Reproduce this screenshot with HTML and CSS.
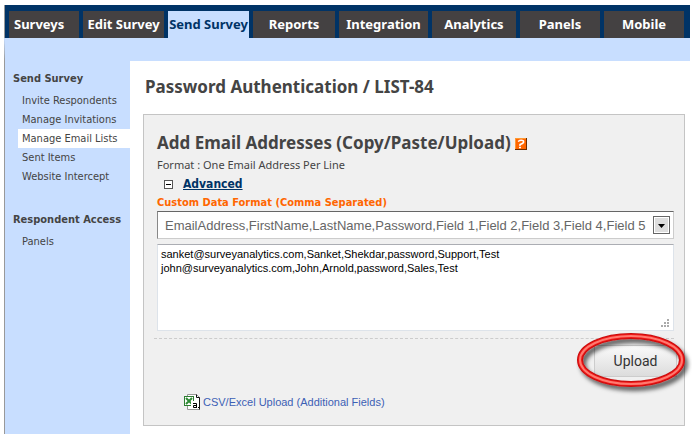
FILE: index.html
```html
<!doctype html>
<html lang="en">
	<head>
		<meta charset="utf-8">
		<title>Password Authentication / LIST-84</title>
		<link rel="stylesheet" href="styles.css">
	</head>
	<body>
		<div class="page">
			<nav class="tabs">
				<a class="first" href="#">Surveys</a>
				<a href="#">Edit Survey</a>
				<a class="active" href="#">Send Survey</a>
				<a href="#">Reports</a>
				<a href="#">Integration</a>
				<a href="#">Analytics</a>
				<a href="#">Panels</a>
				<a href="#">Mobile</a>
			</nav>
			<div class="columns">
				<aside class="sidebar">
					<h2>Send Survey</h2>
					<ul>
						<li><a href="#">Invite Respondents</a></li>
						<li><a href="#">Manage Invitations</a></li>
						<li><a class="active" href="#">Manage Email Lists</a></li>
						<li><a href="#">Sent Items</a></li>
						<li><a href="#">Website Intercept</a></li>
					</ul>
					<h2>Respondent Access</h2>
					<ul>
						<li><a href="#">Panels</a></li>
					</ul>
				</aside>
				<main>
					<h1>Password Authentication / LIST-84</h1>
					<form class="panel">
						<h3>Add Email Addresses (Copy/Paste/Upload)
							<svg class="help" width="12" height="12" viewBox="0 0 12 12">
								<rect width="12" height="12" fill="#f60"/>
								<path d="M0 .5H12M.5 0V12" stroke="#f93"/>
								<path d="M0 11.5H12M11.5 0V12" stroke="#6b2c00"/>
								<path d="M3 3.500Q6 1.500 8.500 3Q9.500 5 5 6.500V8M4 9.500H6" fill="none" stroke="#fff" stroke-width="1.500"/>
							</svg>
						</h3>
						<p class="format">Format : One Email Address Per Line</p>
						<p class="advanced">
							<svg width="9" height="9" viewBox="0 0 9 9">
								<rect x=".5" y=".5" width="8" height="8" fill="#fff" stroke="#555"/>
								<path d="M2 4.500H7" stroke="#000"/>
							</svg>
							<a href="#">Advanced</a>
						</p>
						<label class="custom" for="fields">Custom Data Format (Comma Separated)</label>
						<div class="select">
							<select id="fields">
								<option>EmailAddress,FirstName,LastName,Password,Field 1,Field 2,Field 3,Field 4,Field 5</option>
							</select>
							<svg class="arrow" width="17" height="18" viewBox="0 0 17 18">
								<rect x=".5" y=".5" width="16" height="17" fill="#fff" stroke="#666"/>
								<rect x="2" y="2" width="13" height="14" fill="#ddd"/>
								<path d="M5 8H12L8.500 12Z" fill="#000"/>
							</svg>
						</div>
						<div class="emails">
							<textarea aria-label="Email addresses">sanket@surveyanalytics.com,Sanket,Shekdar,password,Support,Test
john@surveyanalytics.com,John,Arnold,password,Sales,Test</textarea>
							<svg class="grip" width="8" height="8" viewBox="0 0 8 8">
								<path d="M6 1H8M3 4H5M6 4H8M0 7H2M3 7H5M6 7H8" stroke="#aaa" stroke-width="2"/>
							</svg>
						</div>
						<div class="actions">
							<div class="upload">
								<button type="button">Upload</button>
								<svg class="ring" width="116" height="64" viewBox="0 0 116 64">
									<defs>
										<filter id="shadow" x="-20%" y="-20%" width="140%" height="150%">
											<feDropShadow dx="3" dy="4" stdDeviation="2" flood-color="#000" flood-opacity=".6"/>
										</filter>
									</defs>
									<g fill="none">
										<ellipse cx="55" cy="28" rx="51" ry="24" stroke="#c81010" stroke-width="6" filter="url(#shadow)"/>
										<ellipse cx="55" cy="28" rx="51" ry="24" stroke="#f01818" stroke-width="4"/>
										<ellipse cx="55" cy="28" rx="51" ry="24" stroke="#ff7a70" stroke-width="2"/>
									</g>
								</svg>
							</div>
						</div>
						<a class="csv" href="#">
							<svg width="16" height="16" viewBox="0 0 16 16">
								<path d="M3.500 .5H12.500L15.500 3.500V15.500H3.500Z" fill="#fff" stroke="#999"/>
								<path d="M12.500 .5V3.500H15.500V15.500" fill="none" stroke="#111"/>
								<rect x=".5" y="2.500" width="9" height="9" fill="#fff" stroke="#2e7d32"/>
								<path d="M2 4L8 10M8 4L2 10" stroke="#2e8b34" stroke-width="2"/>
								<rect x="7" y="7" width="7" height="8" fill="#fff"/>
								<path d="M9 9.500H12.500V14M12.500 11.500H9.500V13.500H12.500M14 13.500H15" fill="none" stroke="#000"/>
							</svg>
							CSV/Excel Upload (Additional Fields)
						</a>
					</form>
				</main>
			</div>
		</div>
	</body>
</html>
```

FILE: styles.css
```css
* {
	box-sizing: border-box;
}

body {
	margin: 0;
	background-color: #fff;
	color: #444;
	font-family: "DejaVu Sans Condensed", "DejaVu Sans", Tahoma, sans-serif;
	font-size: 11px;
}

h1, h2, h3, p, ul {
	margin: 0;
	padding: 0;
}

a {
	color: inherit;
	text-decoration: none;
}

.page {
	display: flex;
	flex-direction: column;
	min-height: 100vh;
	padding: 5px 3px 0 4px;
}

.tabs {
	display: grid;
	grid-template-columns: 70fr 81fr 81fr 82fr 89fr 84fr 80fr 80fr;
	gap: 4px;
	padding: 6px 6px 0 4px;
	background-color: #036;
	border-left: 1px solid #999;
}

.tabs a {
	background-color: #444142;
	color: #fff;
	font-family: "Noto Sans", Tahoma, sans-serif;
	font-size: 13px;
	font-weight: bold;
	line-height: 27px;
	text-align: center;
	white-space: nowrap;
}

.tabs .first {
	padding-left: 5px;
	text-align: left;
}

.tabs .active {
	background-color: #c8deff;
	color: #036;
}

.columns {
	display: flex;
	flex: 1;
	border-left: 1px solid #999;
	border-top: 23px solid #c8deff;
	background-color: #fff;
}

.sidebar {
	flex: none;
	width: 125px;
	padding: 8px 0 0 8px;
	background-color: #c8deff;
}

.sidebar h2 {
	margin-bottom: 2px;
	font-size: 11px;
	line-height: 20px;
	white-space: nowrap;
}

.sidebar ul {
	margin: 0 0 24px 5px;
	list-style: none;
}

.sidebar li a {
	display: block;
	padding-left: 4px;
	line-height: 19px;
}

.sidebar .active {
	background-color: #fff;
}

main {
	flex: 1;
	padding: 14px 5px 7px 13px;
}

h1, h3 {
	font-family: "Noto Sans", Tahoma, sans-serif;
	font-size: 17px;
}

h1 {
	margin: 0 0 16px 2px;
	line-height: 23px;
}

.panel {
	padding: 16px 10px 15px 13px;
	border: 1px solid #c4c4c4;
	background-color: #f0f0f0;
}

h3 {
	line-height: 24px;
}

.help {
	vertical-align: -1px;
}

.format {
	font-family: "Noto Sans", Tahoma, sans-serif;
	line-height: 20px;
}

.advanced {
	display: flex;
	align-items: center;
	gap: 10px;
	padding-left: 7px;
	line-height: 19px;
}

.advanced a {
	color: #036;
	font-size: 12px;
	font-weight: bold;
	text-decoration: underline;
}

.custom {
	display: block;
	color: #f60;
	font-weight: bold;
	line-height: 17px;
}

.select, .emails {
	position: relative;
	margin-bottom: 5px;
}

select {
	display: block;
	width: 100%;
	height: 28px;
	padding: 0 24px 0 7px;
	appearance: none;
	border: 1px solid #ccc;
	border-top-color: #666;
	border-left-color: #888;
	border-radius: 0;
	background-color: #fff;
	color: #666;
	font-family: "Liberation Sans", Arial, sans-serif;
	font-size: 13px;
}

.arrow {
	position: absolute;
	top: 5px;
	right: 4px;
	pointer-events: none;
}

textarea {
	display: block;
	width: 100%;
	height: 87px;
	padding: 2px 3px;
	border: 1px solid #dde3ea;
	border-top-color: #abadb3;
	background-color: #fff;
	color: #000;
	font-family: "Liberation Sans", Arial, sans-serif;
	font-size: 11px;
	line-height: 14px;
	resize: none;
}

.grip {
	position: absolute;
	right: 5px;
	bottom: 4px;
}

.actions {
	display: flex;
	justify-content: flex-end;
	margin: 7px 0 17px -3px;
	padding-top: 6px;
	border-top: 1px dashed #ccc;
}

.upload {
	position: relative;
	margin-right: -3px;
}

.upload button {
	display: block;
	width: 83px;
	height: 32px;
	border: 1px solid #ccc;
	background: linear-gradient(#fafafa, #dcdcdc);
	color: #333;
	font-family: Roboto, Arial, sans-serif;
	font-size: 14px;
}

/* callout around the upload button, drawn over the form */
.ring {
	position: absolute;
	top: -13px;
	right: -15px;
	pointer-events: none;
}

.csv {
	display: flex;
	align-items: center;
	gap: 3px;
	padding-left: 27px;
	color: #3c5fb5;
	font-family: "Liberation Sans", Arial, sans-serif;
	font-size: 11px;
}
```
